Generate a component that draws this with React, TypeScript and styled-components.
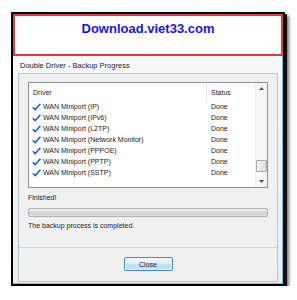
import React from 'react';
import styled, { createGlobalStyle } from 'styled-components';

const GlobalStyle = createGlobalStyle`
    body {
        margin: 0;
        background: #fff;
        font-family: "Liberation Sans", Arial, sans-serif;
    }
`;

const Frame = styled('div')`
    margin: 12px 0 0 11px;
    width: 274px;
    height: 274px;
    box-sizing: border-box;
    border: 2px solid #000;
    box-shadow: 2px 2px 0 #111, 4px 4px 3px rgba(0, 0, 0, 0.55);
    display: flex;
    flex-direction: column;
`;

const Banner = styled('div')`
    height: 42px;
    box-sizing: border-box;
    border: 2px solid #e5393f;
    background: #fff;
    text-align: center;
    padding-top: 5px;
    color: #1414f2;
    font-weight: bold;
    font-size: 13px;
    line-height: 15px;
`;

const Window = styled('div')`
    flex: 1;
    display: flex;
    flex-direction: column;
    padding: 0 4px 1px 5px;
    background: linear-gradient(180deg, #f7f9fb 0%, #e9eef3 100%);
    border-right: 1px solid #62c4ea;
    border-bottom: 1px solid #62c4ea;
`;

const TitleBar = styled('div')`
    height: 17px;
    line-height: 19px;
    padding-left: 2px;
    font-size: 7.5px;
    color: #1e1e1e;
`;

const Client = styled('div')`
    flex: 1;
    display: flex;
    flex-direction: column;
    background: #f0f0f0;
    border: 1px solid #bcc3ca;
`;

const Body = styled('div')`
    flex: 1;
    padding: 8px 9px 0 9px;
    font-size: 7px;
    color: #222;
`;

const ListBox = styled('div')`
    height: 106px;
    box-sizing: border-box;
    border: 1px solid #8b9097;
    background: #fff;
    display: flex;
`;

const ListMain = styled('div')`
    flex: 1;
`;

const Columns = styled('div')`
    display: grid;
    grid-template-columns: 178px 1fr;
`;

const HeaderRow = styled(Columns)`
    height: 17px;
    margin-bottom: 1px;
    line-height: 19px;
`;

const HeaderCell = styled('div')<{ $divider?: boolean }>`
    padding-left: 4px;
    border-right: ${p => (p.$divider ? '1px solid #e2e4e7' : 'none')};
`;

const Row = styled(Columns)`
    height: 11px;
    line-height: 11px;
`;

const DriverCell = styled('div')`
    display: flex;
    align-items: center;
    padding-left: 3px;
    gap: 2px;
`;

const StatusCell = styled('div')`
    padding-left: 4px;
`;

const ScrollBar = styled('div')`
    width: 11px;
    background: #f6f6f6;
    border-left: 1px solid #ececec;
    display: flex;
    flex-direction: column;
    align-items: center;
`;

const Arrow = styled('div')`
    height: 11px;
    display: flex;
    align-items: center;
    justify-content: center;
`;

const Track = styled('div')`
    flex: 1;
    width: 100%;
    display: flex;
    flex-direction: column;
    justify-content: flex-end;
`;

const Thumb = styled('div')`
    height: 12px;
    margin: 0 0 4px 0;
    box-sizing: border-box;
    border: 1px solid #a5a8ad;
    border-radius: 1px;
    background: linear-gradient(90deg, #f2f2f2, #dcdcdc);
`;

const Label = styled('div')<{ $top: number }>`
    margin-top: ${p => p.$top}px;
    line-height: 9px;
`;

const Progress = styled('div')`
    margin-top: 6px;
    height: 9px;
    box-sizing: border-box;
    border: 1px solid #b2b2b2;
    border-radius: 2px;
    background: linear-gradient(180deg, #f2f2f2 0%, #d8d8d8 50%, #cccccc 51%, #e2e2e2 100%);
`;

const Footer = styled('div')`
    height: 32px;
    border-top: 1px solid #d2d2d2;
    display: flex;
    align-items: center;
    justify-content: center;
    padding-bottom: 1px;
`;

const Button = styled('button')`
    width: 49px;
    height: 14px;
    padding: 0;
    font-family: "Liberation Sans", Arial, sans-serif;
    font-size: 7px;
    color: #222;
    border: 1px solid #3c8cc4;
    border-radius: 2px;
    background: linear-gradient(180deg, #eef7fd 0%, #dbeefa 50%, #c4e3f7 51%, #b6dbf4 100%);
    box-shadow: inset 0 0 0 1px #f2fbff;
`;

const Check = () => (
    <svg width="9" height="8" viewBox="0 0 9 8">
        <path d="M0.8 4.2 L3.2 6.6 L8.4 0.8" stroke="#1b5fe0" strokeWidth="1.6" fill="none" />
    </svg>
);

const drivers = ['IP', 'IPv6', 'L2TP', 'Network Monitor', 'PPPOE', 'PPTP', 'SSTP'];

export default () => (
    <>
        <GlobalStyle />
        <Frame>
            <Banner>Download.viet33.com</Banner>
            <Window>
                <TitleBar>Double Driver - Backup Progress</TitleBar>
                <Client>
                    <Body>
                        <ListBox>
                            <ListMain>
                                <HeaderRow>
                                    <HeaderCell $divider>Driver</HeaderCell>
                                    <HeaderCell>Status</HeaderCell>
                                </HeaderRow>
                                {drivers.map(name => (
                                    <Row key={name}>
                                        <DriverCell>
                                            <Check />
                                            WAN Miniport ({name})
                                        </DriverCell>
                                        <StatusCell>Done</StatusCell>
                                    </Row>
                                ))}
                            </ListMain>
                            <ScrollBar>
                                <Arrow>
                                    <svg width="5" height="3" viewBox="0 0 5 3"><path d="M0 3 L2.5 0 L5 3Z" fill="#555" /></svg>
                                </Arrow>
                                <Track>
                                    <Thumb />
                                </Track>
                                <Arrow>
                                    <svg width="5" height="3" viewBox="0 0 5 3"><path d="M0 0 L2.5 3 L5 0Z" fill="#555" /></svg>
                                </Arrow>
                            </ScrollBar>
                        </ListBox>
                        <Label $top={5}>Finished!</Label>
                        <Progress />
                        <Label $top={4}>The backup process is completed.</Label>
                    </Body>
                    <Footer>
                        <Button>Close</Button>
                    </Footer>
                </Client>
            </Window>
        </Frame>
    </>
);
